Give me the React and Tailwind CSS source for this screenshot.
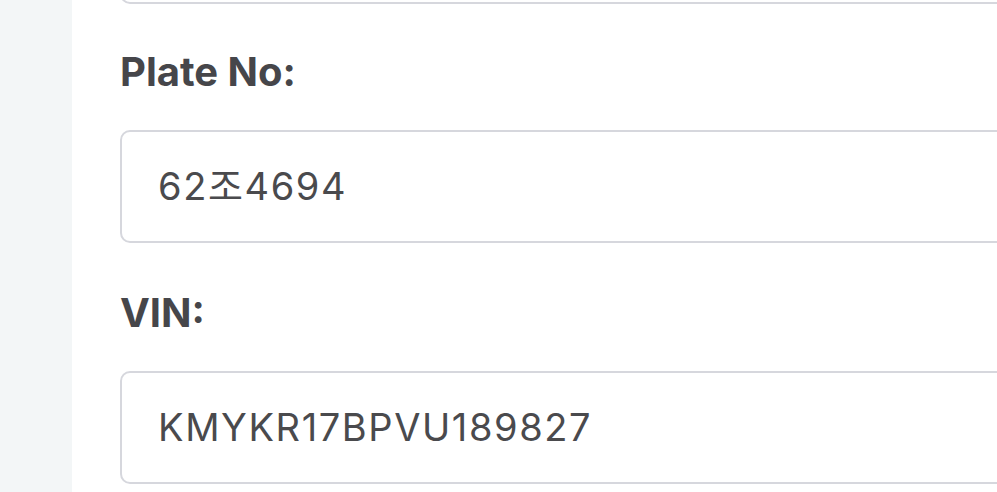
import React from 'react';

const fields = [
  { label: 'Plate No:', value: '62조4694', gap: 'mt-[44px]' },
  { label: 'VIN:', value: 'KMYKR17BPVU189827', gap: 'mt-[46px]' },
];

const Field = ({ label, value, gap }) => (
  <div className="flex flex-col">
    <label className={`${gap} text-[40px] leading-[48px] font-bold text-[#46464a]`}>
      {label}
    </label>
    <div className="mt-[34px] h-[113px] flex items-center rounded-[10px] border-2 border-[#d6d7dd] bg-white px-[36px] text-[38px] tracking-[1.6px] text-[#4a4a4d]">
      {value}
    </div>
  </div>
);

const App = () => {
  return (
    <div
      className="flex h-[492px] w-[997px] overflow-hidden bg-white"
      style={{ fontFamily: 'Inter, "Noto Sans CJK KR", sans-serif' }}
    >
      {/* side rail */}
      <div className="w-[72px] shrink-0 bg-[#f3f6f7]" />

      {/* form panel */}
      <div className="flex w-[1100px] shrink-0 flex-col pl-[48px]">
        {/* previous field, scrolled out of view */}
        <div className="-mt-[109px] h-[113px] shrink-0 rounded-[10px] border-2 border-[#d6d7dd]" />

        {fields.map((f) => (
          <Field key={f.label} label={f.label} value={f.value} gap={f.gap} />
        ))}
      </div>
    </div>
  );
};

export default App;
